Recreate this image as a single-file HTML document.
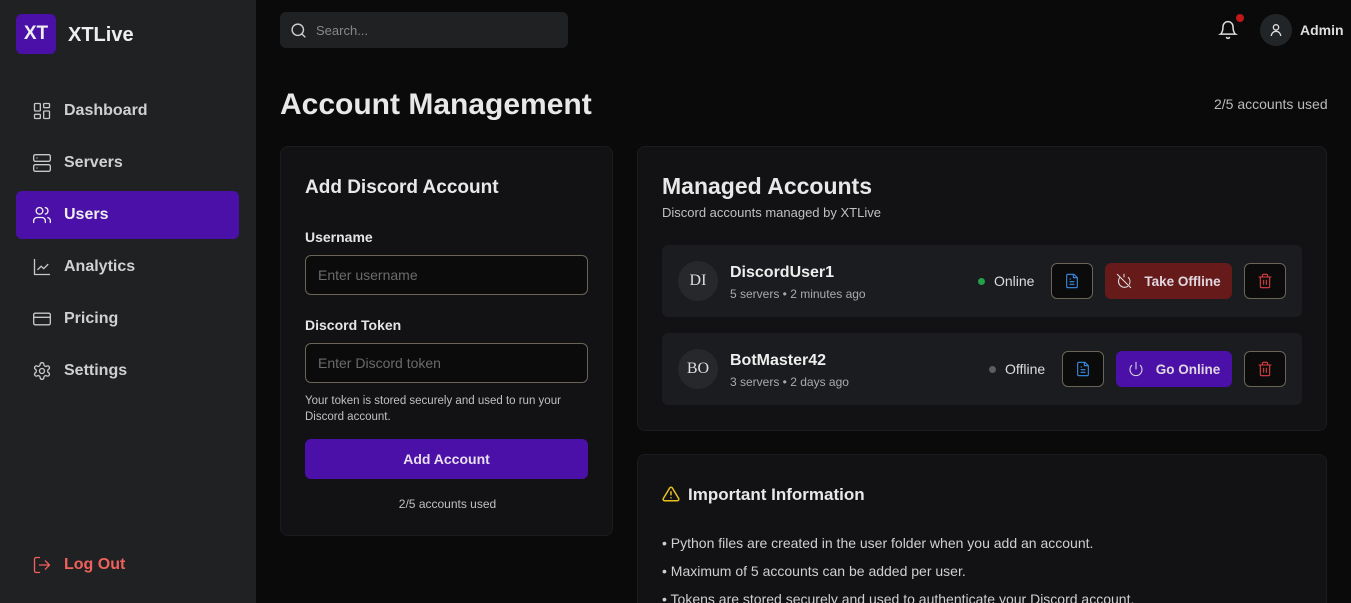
<!DOCTYPE html>
<html style="width:1351px;height:603px;overflow:hidden"><head><meta charset="utf-8"><style>
*{box-sizing:border-box;margin:0;padding:0}
body{width:1351px;height:603px;overflow:hidden;background:#0a0a0b;font-family:"Liberation Sans",sans-serif;color:#e5e5e5;position:relative}
.sb{position:absolute;left:0;top:0;width:256px;height:603px;background:#1f2123}
.logo{position:absolute;left:16px;top:14px;width:40px;height:40px;border-radius:6px;background:#4a10a8;color:#eee;font-weight:bold;font-size:19px;line-height:40px;text-align:center}
.brand{position:absolute;left:68px;top:24px;font-size:20px;font-weight:bold;color:#eee}
.nav{position:absolute;left:16px;width:223px;height:48px;border-radius:6px;display:flex;align-items:center;padding-left:16px;font-size:16px;font-weight:bold;color:#d0d0d0}
.nav svg{width:20px;height:20px;margin-right:12px;fill:none;stroke:#c8c8c8;stroke-width:1.6;stroke-linecap:round;stroke-linejoin:round}
.nav.act{background:#4a10a8;color:#eee}
.abs{position:absolute}
.card{position:absolute;background:#121215;border:1px solid #1c1c20;border-radius:8px}
.inp{position:absolute;left:24px;width:283px;height:40px;border:1px solid #6b6458;border-radius:6px;background:#0b0b0c;color:#6b6b6b;font-size:14px;padding:12px;line-height:14px}
.lbl{position:absolute;left:24px;font-size:14px;font-weight:bold;color:#e5e5e5}
.row{position:absolute;left:24px;width:640px;height:72px;background:#1b1c1f;border-radius:6px}
.av{position:absolute;left:16px;top:16px;width:40px;height:40px;border-radius:50%;background:#26282b;color:#ddd;font-size:16px;line-height:40px;text-align:center;font-family:"Liberation Serif",serif}
.nm{position:absolute;left:68px;top:19px;font-size:16px;font-weight:bold;color:#eee}
.sub{position:absolute;left:68px;top:42px;font-size:12px;color:#aaa}
.ib{position:absolute;top:18px;width:42px;height:36px;border:1px solid #6b6458;border-radius:6px;background:#0b0b0c;display:flex;align-items:center;justify-content:center}
.ib svg{width:16px;height:16px;fill:none;stroke-width:1.6;stroke-linecap:round;stroke-linejoin:round}
.btn{position:absolute;top:18px;height:36px;border-radius:6px;display:flex;align-items:center;justify-content:center;font-size:13.5px;font-weight:bold;color:#e0d8e0}
.btn svg{width:16px;height:16px;fill:none;stroke:#ddd;stroke-width:1.6;stroke-linecap:round;margin-right:12px}
.st{position:absolute;top:28px;font-size:14px;color:#ddd}
.st i{display:inline-block;width:7px;height:7px;border-radius:50%;margin-right:9px;vertical-align:1px}
.li{position:absolute;left:24px;font-size:14px;color:#d0d0d0}
</style></head><body>
<div class="sb">
<div class="logo">XT</div><div class="brand">XTLive</div>
<div class="nav" style="top:87px"><svg viewBox="0 0 24 24"><rect x="3" y="3" width="7" height="9" rx="1"/><rect x="14" y="3" width="7" height="5" rx="1"/><rect x="14" y="12" width="7" height="9" rx="1"/><rect x="3" y="16" width="7" height="5" rx="1"/></svg>Dashboard</div>
<div class="nav" style="top:139px"><svg viewBox="0 0 24 24"><rect x="2" y="2" width="20" height="8" rx="2"/><rect x="2" y="14" width="20" height="8" rx="2"/><path d="M6 6h.01M6 18h.01"/></svg>Servers</div>
<div class="nav act" style="top:191px"><svg viewBox="0 0 24 24" style="stroke:#eee"><circle cx="9" cy="7" r="4"/><path d="M2 21v-2a4 4 0 0 1 4-4h6a4 4 0 0 1 4 4v2M16 3.1a4 4 0 0 1 0 7.8M22 21v-2a4 4 0 0 0-3-3.9"/></svg>Users</div>
<div class="nav" style="top:243px"><svg viewBox="0 0 24 24"><path d="M3 3v18h18M7 15l4-4 3 3 5-5"/></svg>Analytics</div>
<div class="nav" style="top:295px"><svg viewBox="0 0 24 24"><rect x="2" y="5" width="20" height="14" rx="2"/><path d="M2 10h20"/></svg>Pricing</div>
<div class="nav" style="top:347px"><svg viewBox="0 0 24 24"><circle cx="12" cy="12" r="3"/><path d="M12.2 2h-.4a2 2 0 0 0-2 2v.2a2 2 0 0 1-1 1.7l-.4.3a2 2 0 0 1-2 0l-.2-.1a2 2 0 0 0-2.7.7l-.2.4a2 2 0 0 0 .7 2.7l.2.1a2 2 0 0 1 1 1.7v.5a2 2 0 0 1-1 1.8l-.2.1a2 2 0 0 0-.7 2.7l.2.4a2 2 0 0 0 2.7.7l.2-.1a2 2 0 0 1 2 0l.4.3a2 2 0 0 1 1 1.7v.2a2 2 0 0 0 2 2h.4a2 2 0 0 0 2-2v-.2a2 2 0 0 1 1-1.7l.4-.3a2 2 0 0 1 2 0l.2.1a2 2 0 0 0 2.7-.7l.2-.4a2 2 0 0 0-.7-2.7l-.2-.1a2 2 0 0 1-1-1.7v-.5a2 2 0 0 1 1-1.8l.2-.1a2 2 0 0 0 .7-2.7l-.2-.4a2 2 0 0 0-2.7-.7l-.2.1a2 2 0 0 1-2 0l-.4-.3a2 2 0 0 1-1-1.7V4a2 2 0 0 0-2-2z"/></svg>Settings</div>
<div class="nav" style="top:541px;color:#f0605c"><svg viewBox="0 0 24 24" style="stroke:#f0605c"><path d="M9 21H5a2 2 0 0 1-2-2V5a2 2 0 0 1 2-2h4M16 17l5-5-5-5M21 12H9"/></svg>Log Out</div>
</div>
<div class="abs" style="left:280px;top:12px;width:288px;height:36px;background:#1f2123;border-radius:6px">
<svg class="abs" style="left:10px;top:10px" width="17" height="17" viewBox="0 0 24 24" fill="none" stroke="#ccc" stroke-width="2" stroke-linecap="round"><circle cx="11" cy="11" r="8"/><path d="M21 21l-4.3-4.3"/></svg>
<div class="abs" style="left:36px;top:11px;font-size:13px;color:#888">Search...</div></div>
<svg class="abs" style="left:1218px;top:20px" width="20" height="20" viewBox="0 0 24 24" fill="none" stroke="#ddd" stroke-width="1.8" stroke-linecap="round"><path d="M6 8a6 6 0 0 1 12 0c0 7 3 9 3 9H3s3-2 3-9M10.3 21a1.9 1.9 0 0 0 3.4 0"/></svg>
<div class="abs" style="left:1236px;top:14px;width:8px;height:8px;border-radius:50%;background:#c01818"></div>
<div class="abs" style="left:1260px;top:14px;width:32px;height:32px;border-radius:50%;background:#222527"><svg class="abs" style="left:8px;top:8px" width="16" height="16" viewBox="0 0 24 24" fill="none" stroke="#ddd" stroke-width="2"><circle cx="12" cy="8" r="4"/><path d="M5 21a7 7 0 0 1 14 0"/></svg></div>
<div class="abs" style="left:1300px;top:22px;font-size:14px;font-weight:bold;color:#ddd">Admin</div>
<div class="abs" style="left:280px;top:88px;font-size:30px;font-weight:bold;color:#e8e8e8">Account Management</div>
<div class="abs" style="left:1214px;top:96px;font-size:14px;color:#bbb">2/5 accounts used</div>

<div class="card" style="left:280px;top:146px;width:333px;height:390px">
<div class="abs" style="left:24px;top:30px;font-size:19px;font-weight:bold;color:#e8e8e8">Add Discord Account</div>
<div class="lbl" style="top:82px">Username</div>
<div class="inp" style="top:108px">Enter username</div>
<div class="lbl" style="top:170px">Discord Token</div>
<div class="inp" style="top:196px">Enter Discord token</div>
<div class="abs" style="left:24px;top:246px;width:283px;font-size:11.5px;line-height:16px;color:#c0c0c0">Your token is stored securely and used to run your Discord account.</div>
<div class="abs" style="left:24px;top:292px;width:283px;height:40px;border-radius:6px;background:#4a10a8;color:#e8e0f0;font-size:14px;font-weight:bold;text-align:center;line-height:40px">Add Account</div>
<div class="abs" style="left:0;width:333px;top:350px;text-align:center;font-size:12px;color:#c0c0c0">2/5 accounts used</div>
</div>

<div class="card" style="left:637px;top:146px;width:690px;height:285px">
<div class="abs" style="left:24px;top:26px;font-size:23px;font-weight:bold;color:#e8e8e8">Managed Accounts</div>
<div class="abs" style="left:24px;top:58px;font-size:13px;color:#c0c0c0">Discord accounts managed by XTLive</div>
<div class="row" style="top:98px">
<div class="av">DI</div><div class="nm">DiscordUser1</div><div class="sub">5 servers • 2 minutes ago</div>
<div class="st" style="left:316px"><i style="background:#22a04a"></i>Online</div>
<div class="ib" style="left:389px"><svg viewBox="0 0 24 24" stroke="#3b8ee8"><path d="M15 2H6a2 2 0 0 0-2 2v16a2 2 0 0 0 2 2h12a2 2 0 0 0 2-2V7zM14 2v5h5M9 13h6M9 17h6M9 9h1"/></svg></div>
<div class="btn" style="left:443px;width:127px;background:#661a1a"><svg viewBox="0 0 24 24"><path d="M2 2l20 20M12 2v4M18.4 6.6A9 9 0 0 1 20 17M6 6.5a9 9 0 0 0 11.5 13.6"/></svg>Take Offline</div>
<div class="ib" style="left:582px"><svg viewBox="0 0 24 24" stroke="#e04040"><path d="M3 6h18M19 6v14a2 2 0 0 1-2 2H7a2 2 0 0 1-2-2V6M8 6V4a2 2 0 0 1 2-2h4a2 2 0 0 1 2 2v2M10 11v6M14 11v6"/></svg></div>
</div>
<div class="row" style="top:186px">
<div class="av">BO</div><div class="nm">BotMaster42</div><div class="sub">3 servers • 2 days ago</div>
<div class="st" style="left:327px"><i style="background:#5a5e63"></i>Offline</div>
<div class="ib" style="left:400px"><svg viewBox="0 0 24 24" stroke="#3b8ee8"><path d="M15 2H6a2 2 0 0 0-2 2v16a2 2 0 0 0 2 2h12a2 2 0 0 0 2-2V7zM14 2v5h5M9 13h6M9 17h6M9 9h1"/></svg></div>
<div class="btn" style="left:454px;width:116px;background:#4a10a8"><svg viewBox="0 0 24 24"><path d="M12 2v10M18.4 6.6a9 9 0 1 1-12.8 0"/></svg>Go Online</div>
<div class="ib" style="left:582px"><svg viewBox="0 0 24 24" stroke="#e04040"><path d="M3 6h18M19 6v14a2 2 0 0 1-2 2H7a2 2 0 0 1-2-2V6M8 6V4a2 2 0 0 1 2-2h4a2 2 0 0 1 2 2v2M10 11v6M14 11v6"/></svg></div>
</div>
</div>

<div class="card" style="left:637px;top:454px;width:690px;height:160px;border-bottom:none;border-radius:8px 8px 0 0;overflow:hidden">
<svg class="abs" style="left:24px;top:30px" width="18" height="18" viewBox="0 0 24 24" fill="none" stroke="#e8c020" stroke-width="2" stroke-linecap="round"><path d="M10.3 3.9L1.8 18a2 2 0 0 0 1.7 3h17a2 2 0 0 0 1.7-3L13.7 3.9a2 2 0 0 0-3.4 0zM12 9v4M12 17h.01"/></svg>
<div class="abs" style="left:50px;top:30px;font-size:17px;font-weight:bold;color:#e8e8e8">Important Information</div>
<div class="li" style="top:80px">• Python files are created in the user folder when you add an account.</div>
<div class="li" style="top:108px">• Maximum of 5 accounts can be added per user.</div>
<div class="li" style="top:136px">• Tokens are stored securely and used to authenticate your Discord account.</div>
</div>
</body></html>
